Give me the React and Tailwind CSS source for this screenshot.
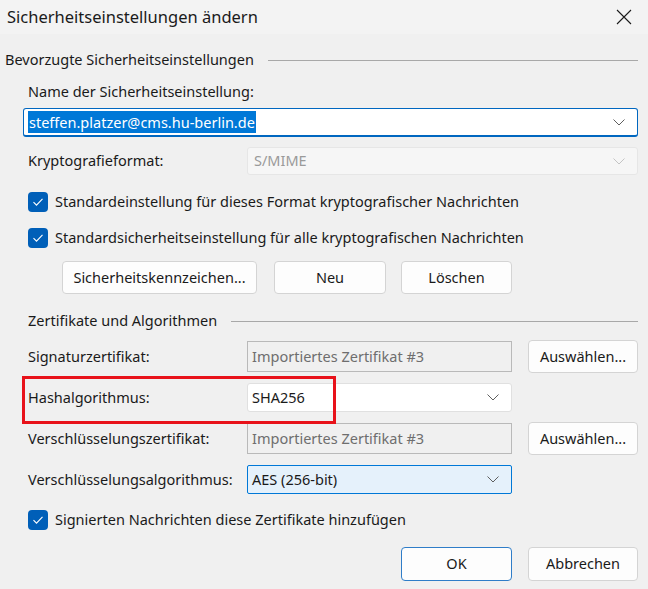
import React from 'react';

const font = { fontFamily: '"Segoe UI", "Noto Sans", "Liberation Sans", sans-serif' };

function Chevron({ className = '' }) {
  return (
    <svg width="12" height="7" viewBox="0 0 12 7" className={className}>
      <path d="M0.5 0.5 L6 6 L11.5 0.5" fill="none" stroke="currentColor" strokeWidth="1" />
    </svg>
  );
}

function Check() {
  return (
    <span className="w-[20px] h-[20px] rounded-[4px] bg-[#005fb8] flex items-center justify-center shrink-0">
      <svg width="12" height="10" viewBox="0 0 12 10">
        <path d="M1.5 5.2 L4.5 8.2 L10.5 1.8" fill="none" stroke="#fff" strokeWidth="1.1" />
      </svg>
    </span>
  );
}

function GroupTitle({ children, pl }) {
  return (
    <div className={`flex items-center h-[20px] pr-[10px] ${pl}`}>
      <span className="whitespace-nowrap">{children}</span>
      <div className="flex-1 h-px bg-[#a8a8a8] ml-[14px]" />
    </div>
  );
}

function Btn({ children, w, primary }) {
  return (
    <button
      className={`${w} h-full rounded-[4px] bg-[#fdfdfd] text-[#1a1a1a] flex items-center justify-center border ${
        primary ? 'border-[#2f7dc8]' : 'border-[#d4d4d4]'
      }`}
    >
      {children}
    </button>
  );
}

function FormRow({ label, h, mt, children }) {
  return (
    <div className={`flex items-center pl-[28px] pr-[10px] ${h} ${mt}`}>
      <div className="w-[219px] whitespace-nowrap">{label}</div>
      {children}
    </div>
  );
}

export default function App() {
  return (
    <div className="w-[648px] h-[589px] bg-[#f0f0f0] text-[14.5px] text-[#1a1a1a] overflow-hidden" style={font}>
      {/* title bar */}
      <div className="h-[34px] flex items-center justify-between pl-[7px] pr-[16px] bg-[#f3f3f3]">
        <span className="text-[16.5px]">Sicherheitseinstellungen ändern</span>
        <svg width="16" height="16" viewBox="0 0 16 16">
          <path d="M1 1 L15 15 M15 1 L1 15" stroke="#1a1a1a" strokeWidth="1.1" />
        </svg>
      </div>

      <div className="mt-[16px]">
        <GroupTitle pl="pl-[5px]">Bevorzugte Sicherheitseinstellungen</GroupTitle>
      </div>

      <div className="pl-[28px] h-[20px] mt-[12px] flex items-center">Name der Sicherheitseinstellung:</div>

      <div className="pl-[23px] pr-[10px] mt-[6px]">
        <div className="h-[29px] bg-white border border-[#0067c0] border-b-2 rounded-[3px] flex items-center pl-[4px] pr-[12px]">
          <span className="bg-[#0078d7] text-white px-[1px] leading-[22px]">steffen.platzer@cms.hu-berlin.de</span>
          <div className="flex-1" />
          <Chevron className="text-[#5f5f5f]" />
        </div>
      </div>

      <FormRow label="Kryptografieformat:" h="h-[28px]" mt="mt-[10px]">
        <div className="flex-1 h-full bg-[#f6f6f6] border border-[#e6e6e6] rounded-[3px] flex items-center pl-[6px] pr-[12px] text-[#9a9a9a]">
          <span className="flex-1">S/MIME</span>
          <Chevron className="text-[#c4c4c4]" />
        </div>
      </FormRow>

      <div className="pl-[28px] h-[21px] mt-[16px] flex items-center gap-[7px]">
        <Check />
        <span>Standardeinstellung für dieses Format kryptografischer Nachrichten</span>
      </div>
      <div className="pl-[28px] h-[21px] mt-[15px] flex items-center gap-[7px]">
        <Check />
        <span>Standardsicherheitseinstellung für alle kryptografischen Nachrichten</span>
      </div>

      <div className="pl-[62px] h-[33px] mt-[13px] flex">
        <Btn w="w-[195px]">Sicherheitskennzeichen...</Btn>
        <div className="w-[17px]" />
        <Btn w="w-[112px]">Neu</Btn>
        <div className="w-[15px]" />
        <Btn w="w-[111px]">Löschen</Btn>
      </div>

      <div className="mt-[17px]">
        <GroupTitle pl="pl-[28px]">Zertifikate und Algorithmen</GroupTitle>
      </div>

      <FormRow label="Signaturzertifikat:" h="h-[33px]" mt="mt-[9px]">
        <div className="w-[265px] h-[31px] bg-[#f0f0f0] border border-[#b9b9b9] flex items-center pl-[4px] text-[#6e6e6e]">
          Importiertes Zertifikat #3
        </div>
        <div className="w-[16px]" />
        <Btn w="w-[110px]">Auswählen...</Btn>
      </FormRow>

      <div className="relative pt-[10px]">
        <FormRow label="Hashalgorithmus:" h="h-[29px]" mt="mt-0">
          <div className="w-[265px] h-full bg-white border border-[#e0e0e0] rounded-[3px] flex items-center pl-[4px] pr-[12px]">
            <span className="flex-1">SHA256</span>
            <Chevron className="text-[#5f5f5f]" />
          </div>
        </FormRow>
        {/* highlight annotation */}
        <div className="absolute left-[22px] top-[3px] w-[314px] h-[48px] border-[3px] border-[#e8121a] pointer-events-none" />
      </div>

      <FormRow label="Verschlüsselungszertifikat:" h="h-[33px]" mt="mt-[10px]">
        <div className="w-[265px] h-[31px] bg-[#f0f0f0] border border-[#b9b9b9] flex items-center pl-[4px] text-[#6e6e6e]">
          Importiertes Zertifikat #3
        </div>
        <div className="w-[16px]" />
        <Btn w="w-[110px]">Auswählen...</Btn>
      </FormRow>

      <FormRow label="Verschlüsselungsalgorithmus:" h="h-[29px]" mt="mt-[10px]">
        <div className="w-[265px] h-full bg-[#e5f1fb] border border-[#0078d7] rounded-[2px] flex items-center pl-[4px] pr-[12px]">
          <span className="flex-1">AES (256-bit)</span>
          <Chevron className="text-[#5f5f5f]" />
        </div>
      </FormRow>

      <div className="pl-[28px] h-[21px] mt-[15px] flex items-center gap-[7px]">
        <Check />
        <span>Signierten Nachrichten diese Zertifikate hinzufügen</span>
      </div>

      <div className="flex justify-end pr-[10px] h-[34px] mt-[17px]">
        <Btn w="w-[111px]" primary>OK</Btn>
        <div className="w-[16px]" />
        <Btn w="w-[110px]">Abbrechen</Btn>
      </div>
    </div>
  );
}
